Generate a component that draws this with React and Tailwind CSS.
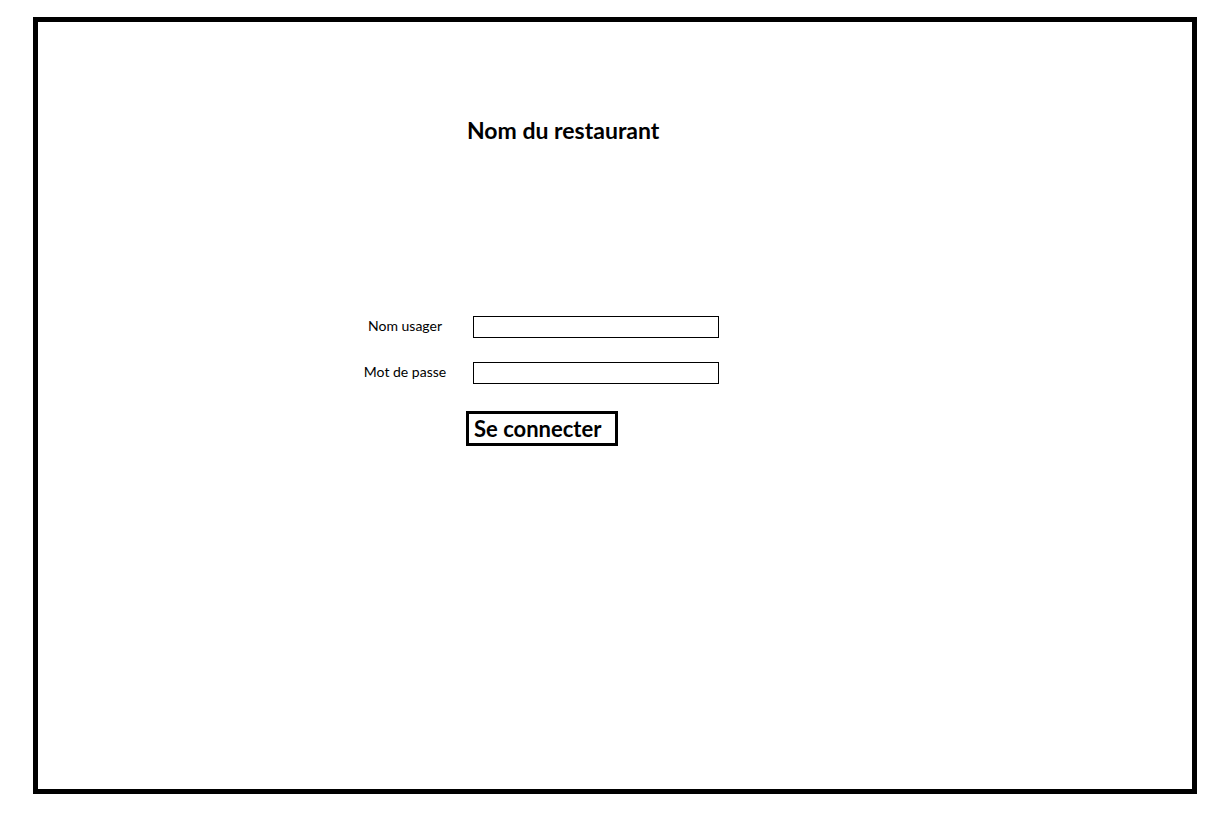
import React from 'react'

const Field = ({ label, type = 'text' }) => (
  <div className="flex items-center h-[22px]">
    <label className="w-[90px] text-center text-[14px] text-black pb-[4px]">{label}</label>
    <input
      type={type}
      className="ml-[23px] w-[246px] h-[22px] border border-black bg-white outline-none"
    />
  </div>
)

const App = () => {
  return (
    <div className="w-[1224px] h-[820px] bg-white pt-[17px] pl-[33px]" style={{ fontFamily: 'Lato, "Open Sans", sans-serif' }}>
      <div className="w-[1164px] h-[777px] border-[5px] border-black">
        <div className="pl-[429px] pt-[94px]">
          <h1 className="text-[23px] font-bold leading-[28px] text-black">Nom du restaurant</h1>
        </div>

        <div className="pl-[322px] pt-[172px] flex flex-col gap-[24px]">
          <Field label="Nom usager" />
          <Field label="Mot de passe" type="password" />
        </div>

        <div className="pl-[428px] pt-[27px]">
          <button className="w-[152px] h-[35px] border-[3px] border-black bg-white text-left pl-[5px] text-[22px] font-bold text-black leading-none">
            Se connecter
          </button>
        </div>
      </div>
    </div>
  )
}

export default App
